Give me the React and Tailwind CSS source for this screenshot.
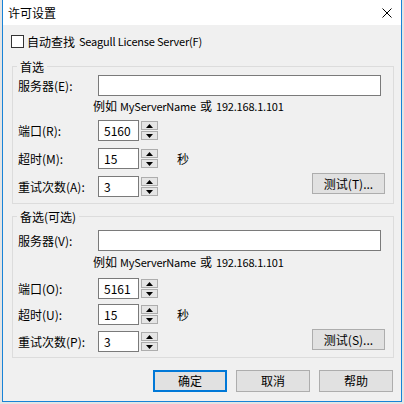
// License settings dialog (Windows 10 look)

const FONT = "font-['Noto_Sans_CJK_SC','Microsoft_YaHei',sans-serif]";

// Latin runs render a bit narrower than the CJK text around them
function Latin({ children, className = "" }) {
  return <span className={`text-[11px] tracking-[-0.2px] ${className}`}>{children}</span>;
}

function Arrow({ up }) {
  return (
    <svg width="7" height="4" viewBox="0 0 7 4" className="block">
      {up ? <path d="M0 4 L3.5 0 L7 4 Z" fill="#000" /> : <path d="M0 0 L3.5 4 L7 0 Z" fill="#000" />}
    </svg>
  );
}

function SpinBox({ value }) {
  return (
    <div className="flex items-center gap-[2px]">
      <div className="w-[41px] h-[21px] border border-[#7a7a7a] bg-white pl-[5px] flex items-center leading-none">
        {value}
      </div>
      <div className="w-[17px] h-[21px] py-[1px] flex flex-col gap-[1px]">
        <div className="flex-1 border border-[#adadad] bg-[#e5e5e5] flex items-center justify-center">
          <Arrow up />
        </div>
        <div className="flex-1 border border-[#adadad] bg-[#e5e5e5] flex items-center justify-center">
          <Arrow />
        </div>
      </div>
    </div>
  );
}

function Button({ children, primary, className = "" }) {
  return (
    <div
      className={`w-[74px] h-[22px] flex items-center justify-center bg-[#e1e1e1] ${
        primary ? "border-2 border-[#0078d7]" : "border border-[#adadad]"
      } ${className}`}
    >
      {children}
    </div>
  );
}

function Label({ children }) {
  return <div className="w-[80px] shrink-0">{children}</div>;
}

function GroupTitle({ children }) {
  return (
    <div className="-mt-[8px] ml-[4px] px-[3px] w-fit h-[16px] leading-[16px] bg-[#f0f0f0]">{children}</div>
  );
}

function Hint({ className = "" }) {
  return (
    <div className={`h-[16px] leading-[16px] pl-[80px] flex items-center ${className}`}>
      <span>例如</span>
      <Latin className="ml-[3px]">MyServerName</Latin>
      <span className="ml-[4px]">或</span>
      <Latin className="ml-[4px]">192.168.1.101</Latin>
    </div>
  );
}

function ServerRow({ label, className = "" }) {
  return (
    <div className={`flex items-center h-[21px] pl-[5px] ${className}`}>
      <Label>{label}</Label>
      <div className="w-[283px] h-[21px] border border-[#7a7a7a] bg-white" />
    </div>
  );
}

function SpinRow({ label, value, suffix, className = "", children }) {
  return (
    <div className={`flex items-center h-[21px] pl-[5px] ${className}`}>
      <Label>{label}</Label>
      <SpinBox value={value} />
      {suffix && <span className="ml-[19px]">{suffix}</span>}
      {children}
    </div>
  );
}

export default function App() {
  return (
    <div className={`w-[404px] h-[404px] bg-[#e4e4e4] overflow-hidden text-[12px] text-black ${FONT}`}>
      <div className="ml-[2px] w-[400px] h-[402px] border-x border-b border-[#1883d7] bg-[#f0f0f0] flex flex-col">
        {/* Title bar */}
        <div className="h-[25px] bg-white flex items-center justify-between pl-[5px] pr-[9px]">
          <span>许可设置</span>
          <svg width="10" height="10" viewBox="0 0 10 10" className="block">
            <path d="M0.5 0.5 L9.5 9.5 M9.5 0.5 L0.5 9.5" stroke="#000" strokeWidth="1" />
          </svg>
        </div>

        {/* Auto search */}
        <div className="mt-[10px] pl-[8px] flex items-center h-[13px]">
          <div className="w-[13px] h-[13px] border border-[#333] bg-white" />
          <span className="ml-[3px]">自动查找</span>
          <Latin className="ml-[4px]">Seagull License Server(F)</Latin>
        </div>

        {/* Primary server */}
        <div className="mt-[18px] ml-[9px] w-[382px] h-[138px] border border-[#dcdcdc]">
          <GroupTitle>首选</GroupTitle>
          <ServerRow label="服务器(E):" />
          <Hint className="mt-[2px]" />
          <SpinRow label="端口(R):" value="5160" className="mt-[6px]" />
          <SpinRow label="超时(M):" value="15" suffix="秒" className="mt-[7px]" />
          <SpinRow label="重试次数(A):" value="3" className="mt-[7px]">
            <Button className="ml-auto mr-[8px] -mt-[6px] !w-[73px] !h-[21px]">测试(T)...</Button>
          </SpinRow>
        </div>

        {/* Backup server */}
        <div className="mt-[12px] ml-[9px] w-[382px] h-[142px] border border-[#dcdcdc]">
          <GroupTitle>备选(可选)</GroupTitle>
          <ServerRow label="服务器(V):" className="mt-[5px]" />
          <Hint className="mt-[3px]" />
          <SpinRow label="端口(O):" value="5161" className="mt-[8px]" />
          <SpinRow label="超时(U):" value="15" suffix="秒" className="mt-[5px]" />
          <SpinRow label="重试次数(P):" value="3" className="mt-[6px]">
            <Button className="ml-auto mr-[8px] -mt-[4px] !w-[73px] !h-[21px]">测试(S)...</Button>
          </SpinRow>
        </div>

        {/* Dialog buttons */}
        <div className="mt-[12px] pr-[8px] flex justify-end gap-[9px]">
          <Button primary>确定</Button>
          <Button>取消</Button>
          <Button>帮助</Button>
        </div>
      </div>
    </div>
  );
}
